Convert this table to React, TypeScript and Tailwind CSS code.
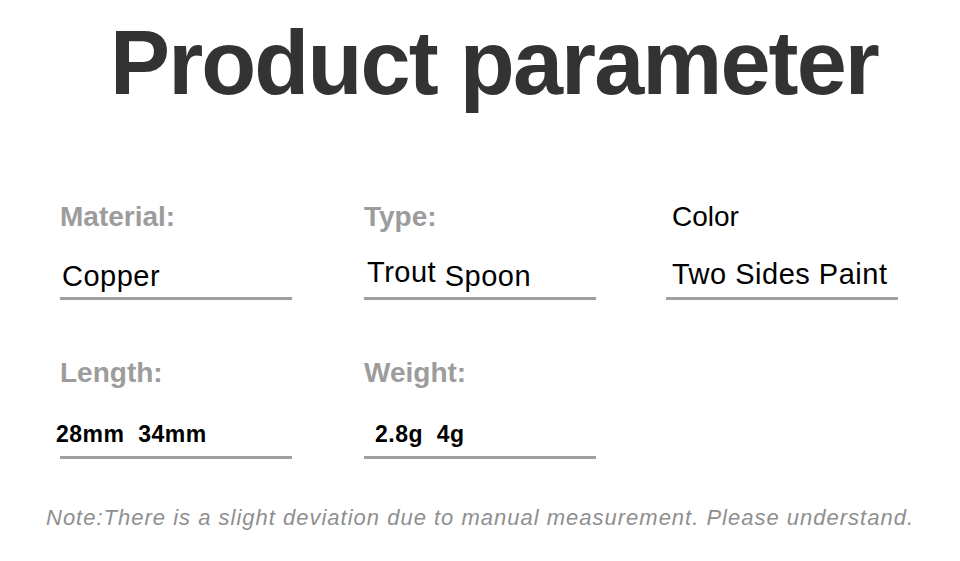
const sans = { fontFamily: '"Liberation Sans", Arial, sans-serif' };

function Field({
  label,
  value,
  labelClass = "",
  valueClass = "",
}: {
  label: string;
  value: React.ReactNode;
  labelClass?: string;
  valueClass?: string;
}) {
  return (
    <div className="w-[232px]">
      <div className={`h-[28px] text-[28px] leading-[28px] ${labelClass}`}>{label}</div>
      <div className={`border-b-[3px] border-[#a0a0a0] whitespace-pre ${valueClass}`}>{value}</div>
    </div>
  );
}

export default function App() {
  const grayLabel = "font-bold text-[#9c9c9c]";
  const big = "mt-[31px] pb-[6px] text-[29px] leading-[29px] text-black tracking-[0.5px]";
  const small = "mt-[36px] pb-[10px] text-[23px] leading-[23px] font-bold text-black tracking-[0.5px]";

  return (
    <div className="w-[960px] h-[561px] bg-white overflow-hidden" style={sans}>
      <h1 className="pt-[18px] pl-[110px] text-[90px] leading-[90px] font-bold text-[#333] tracking-[-1.9px]">
        Product parameter
      </h1>

      <div className="mt-[95px] pl-[60px] grid grid-cols-[304px_302px_232px]">
        <Field label="Material:" labelClass={grayLabel} value="Copper" valueClass={`${big} pl-[2px]`} />
        <Field
          label="Type:"
          labelClass={grayLabel}
          value={
            <>
              <span className="relative -top-[4px]">Trout</span> Spoon
            </>
          }
          valueClass={`${big} pl-[3px]`}
        />
        <Field
          label="Color"
          labelClass="pl-[6px] text-black"
          value="Two Sides Paint"
          valueClass="mt-[29px] pb-[8px] text-[29px] leading-[29px] text-black tracking-[0.5px] pl-[6px]"
        />
      </div>

      <div className="mt-[59px] pl-[60px] grid grid-cols-[304px_302px_232px]">
        <Field label="Length:" labelClass={grayLabel} value={<span className="-ml-[4px]">28mm  34mm</span>} valueClass={small} />
        <Field label="Weight:" labelClass={grayLabel} value="2.8g  4g" valueClass={`${small} pl-[11px]`} />
      </div>

      <p className="mt-[48px] pl-[46px] text-[22px] leading-[22px] italic text-[#8f8f8f] tracking-[1px]">
        Note:There is a slight deviation due to manual measurement. Please understand.
      </p>
    </div>
  );
}
